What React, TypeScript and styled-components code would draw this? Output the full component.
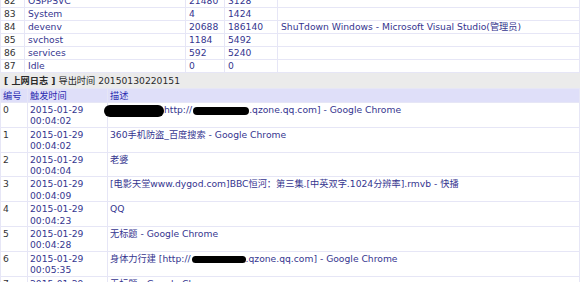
import React from "react";
import styled, { createGlobalStyle } from "styled-components";

const GlobalStyle = createGlobalStyle`
  html, body {
    margin: 0;
    padding: 0;
    background: #fff;
    overflow: hidden;
  }
  body {
    font-family: "DejaVu Sans", "Noto Sans CJK SC", sans-serif;
    font-size: 9.2px;
  }
`;

const Page = styled.div`
  width: 580px;
  height: 282px;
  overflow: hidden;
`;

const Scroller = styled.div`
  margin-top: -6px;
`;

const Grid = styled.table`
  width: 100%;
  border-collapse: collapse;
  table-layout: fixed;
  color: #35358f;
`;

const Cell = styled.td<{ $muted?: boolean }>`
  border: 1px solid #e6e6f6;
  padding: 0 3px;
  height: 12px;
  line-height: 12px;
  white-space: nowrap;
  overflow: hidden;
  color: ${(p) => (p.$muted ? "#333" : "#35358f")};
`;

const LogCell = styled.td<{ $muted?: boolean }>`
  border: 1px solid #e6e6f6;
  padding: 1px 2px 0;
  line-height: 11.4px;
  vertical-align: top;
  white-space: nowrap;
  overflow: visible;
  color: ${(p) => (p.$muted ? "#333" : "#35358f")};
`;

const TitleBar = styled.div`
  height: 15px;
  line-height: 15px;
  background: #ebebeb;
  color: #2a2a2a;
  padding-left: 4px;
  white-space: nowrap;
`;

const TitleStrong = styled.b`
  font-weight: bold;
`;

const HeadRow = styled.tr`
  background: #dfdff9;
`;

const HeadCell = styled.th`
  border: 1px solid #e6e6f6;
  padding: 0 2px;
  height: 13px;
  line-height: 13px;
  text-align: left;
  font-weight: normal;
  color: #2a2ab0;
`;

const Redacted = styled.span<{ $w: number; $h: number; $shift?: number }>`
  display: inline-block;
  width: ${(p) => p.$w}px;
  height: ${(p) => p.$h}px;
  margin-left: ${(p) => p.$shift ?? 0}px;
  background: #000;
  border-radius: ${(p) => p.$h / 2}px;
  vertical-align: middle;
`;

const procs = [
  ["82", "OSPPSVC", "21480", "3128", ""],
  ["83", "System", "4", "1424", ""],
  ["84", "devenv", "20688", "186140", "ShuTdown Windows - Microsoft Visual Studio(管理员)"],
  ["85", "svchost", "1184", "5492", ""],
  ["86", "services", "592", "5240", ""],
  ["87", "Idle", "0", "0", ""],
];

const logs: { id: string; date: string; time: string; desc: React.ReactNode }[] = [
  {
    id: "0",
    date: "2015-01-29",
    time: "00:04:02",
    desc: (
      <>
        <Redacted $w={60} $h={12} $shift={-6} />
        http://
        <Redacted $w={56} $h={8} $shift={1} />
        .qzone.qq.com] - Google Chrome
      </>
    ),
  },
  { id: "1", date: "2015-01-29", time: "00:04:02", desc: "360手机防盗_百度搜索 - Google Chrome" },
  { id: "2", date: "2015-01-29", time: "00:04:04", desc: "老婆" },
  {
    id: "3",
    date: "2015-01-29",
    time: "00:04:09",
    desc: "[电影天堂www.dygod.com]BBC恒河：第三集.[中英双字.1024分辨率].rmvb - 快播",
  },
  { id: "4", date: "2015-01-29", time: "00:04:23", desc: "QQ" },
  { id: "5", date: "2015-01-29", time: "00:04:28", desc: "无标题 - Google Chrome" },
  {
    id: "6",
    date: "2015-01-29",
    time: "00:05:35",
    desc: (
      <>
        身体力行建 [http://
        <Redacted $w={54} $h={7} $shift={1} />
        .qzone.qq.com] - Google Chrome
      </>
    ),
  },
  { id: "7", date: "2015-01-29", time: "00:05:40", desc: "无标题 - Google Chrome" },
];

export default function App() {
  return (
    <Page>
      <GlobalStyle />
      <Scroller>
        <Grid>
          <colgroup>
            <col style={{ width: 24 }} />
            <col style={{ width: 161 }} />
            <col style={{ width: 39 }} />
            <col style={{ width: 53 }} />
            <col />
          </colgroup>
          <tbody>
            {procs.map((r) => (
              <tr key={r[0]}>
                <Cell $muted>{r[0]}</Cell>
                <Cell>{r[1]}</Cell>
                <Cell>{r[2]}</Cell>
                <Cell>{r[3]}</Cell>
                <Cell>{r[4]}</Cell>
              </tr>
            ))}
          </tbody>
        </Grid>
        <TitleBar>
          <TitleStrong>[ 上网日志 ]</TitleStrong> 导出时间 20150130220151
        </TitleBar>
        <Grid>
          <colgroup>
            <col style={{ width: 27 }} />
            <col style={{ width: 80 }} />
            <col />
          </colgroup>
          <thead>
            <HeadRow>
              <HeadCell>编号</HeadCell>
              <HeadCell>触发时间</HeadCell>
              <HeadCell>描述</HeadCell>
            </HeadRow>
          </thead>
          <tbody>
            {logs.map((l) => (
              <tr key={l.id}>
                <LogCell $muted>{l.id}</LogCell>
                <LogCell>
                  {l.date}
                  <br />
                  {l.time}
                </LogCell>
                <LogCell>{l.desc}</LogCell>
              </tr>
            ))}
          </tbody>
        </Grid>
      </Scroller>
    </Page>
  );
}
